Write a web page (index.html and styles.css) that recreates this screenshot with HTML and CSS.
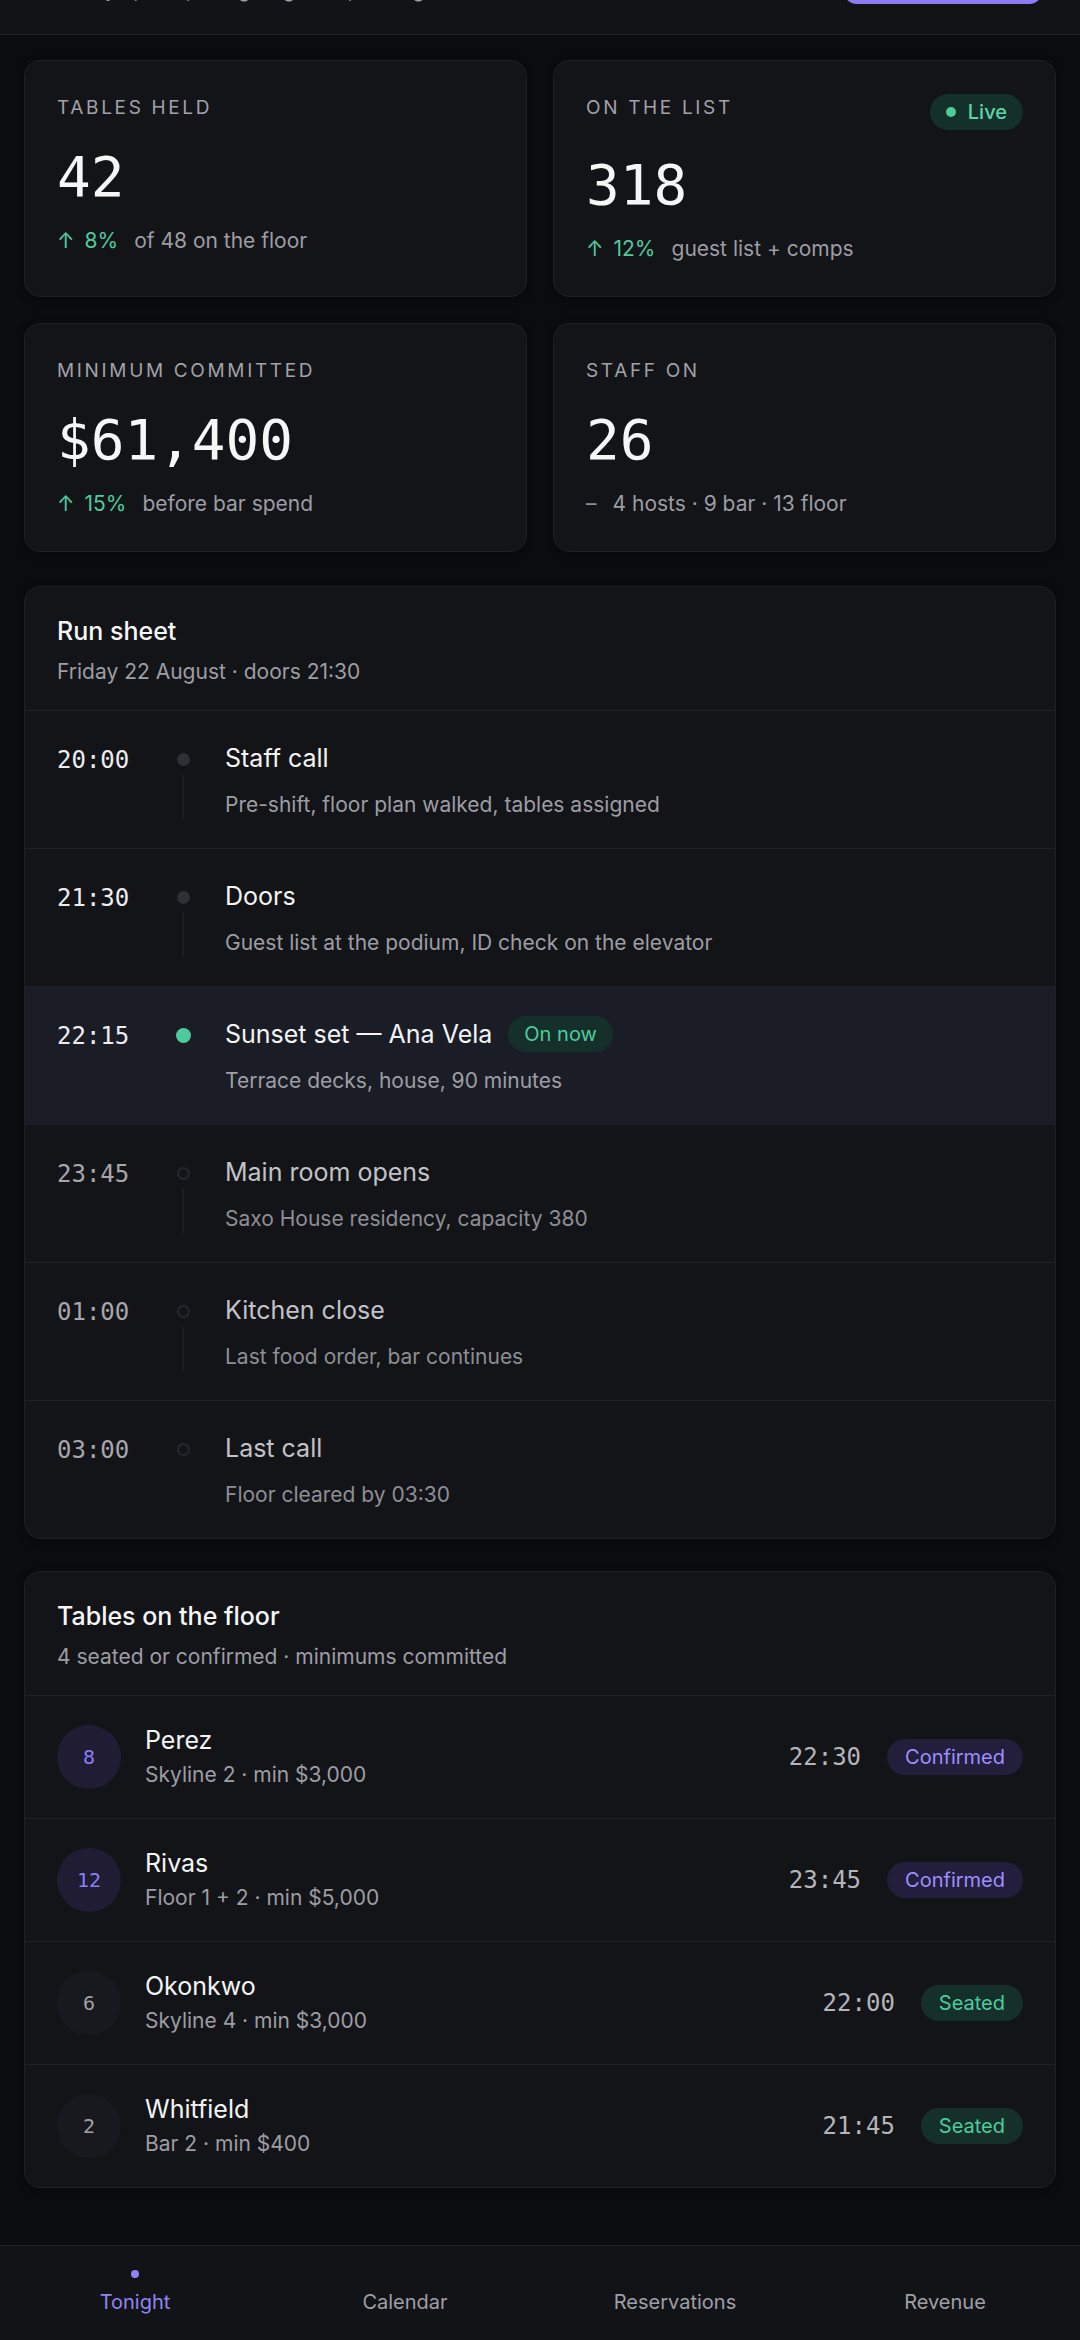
FILE: index.html
```html
<!DOCTYPE html>
<html lang="en">
<head>
    <meta charset="UTF-8">
    <meta name="viewport" content="width=device-width, initial-scale=1.0">
    <title>Tonight - Run sheet</title>
    <link rel="stylesheet" href="styles.css">
</head>
<body>
    <header class="topbar">
        <div class="venue">
            <h1 class="venue-name">Altura Rooftop</h1>
            <p class="venue-sub">Friday · pre-opening · sign-off pending</p>
        </div>
        <button class="btn-primary">New booking</button>
    </header>

    <main class="content">
        <section class="stats">
            <div class="stat">
                <div class="stat-head"><span class="stat-label">Tables held</span></div>
                <div class="stat-value">42</div>
                <div class="stat-foot"><span class="delta up"><span class="arrow">↑</span>8%</span><span>of 48 on the floor</span></div>
            </div>
            <div class="stat">
                <div class="stat-head">
                    <span class="stat-label">On the list</span>
                    <span class="badge badge-live"><i class="live-dot"></i>Live</span>
                </div>
                <div class="stat-value">318</div>
                <div class="stat-foot"><span class="delta up"><span class="arrow">↑</span>12%</span><span>guest list + comps</span></div>
            </div>
            <div class="stat">
                <div class="stat-head"><span class="stat-label">Minimum committed</span></div>
                <div class="stat-value">$61,400</div>
                <div class="stat-foot"><span class="delta up"><span class="arrow">↑</span>15%</span><span>before bar spend</span></div>
            </div>
            <div class="stat">
                <div class="stat-head"><span class="stat-label">Staff on</span></div>
                <div class="stat-value">26</div>
                <div class="stat-foot"><span class="delta flat">–</span><span>4 hosts · 9 bar · 13 floor</span></div>
            </div>
        </section>

        <section class="panel">
            <div class="panel-head">
                <h2>Run sheet</h2>
                <p>Friday 22 August · doors 21:30</p>
            </div>
            <ul class="runsheet">
                <li class="run past">
                    <span class="run-time">20:00</span>
                    <span class="run-track"><i class="dot"></i><i class="rail"></i></span>
                    <div class="run-body">
                        <div class="run-title">Staff call</div>
                        <div class="run-desc">Pre-shift, floor plan walked, tables assigned</div>
                    </div>
                </li>
                <li class="run past">
                    <span class="run-time">21:30</span>
                    <span class="run-track"><i class="dot"></i><i class="rail"></i></span>
                    <div class="run-body">
                        <div class="run-title">Doors</div>
                        <div class="run-desc">Guest list at the podium, ID check on the elevator</div>
                    </div>
                </li>
                <li class="run now">
                    <span class="run-time">22:15</span>
                    <span class="run-track"><i class="dot"></i></span>
                    <div class="run-body">
                        <div class="run-title">Sunset set — Ana Vela <span class="badge badge-now">On now</span></div>
                        <div class="run-desc">Terrace decks, house, 90 minutes</div>
                    </div>
                </li>
                <li class="run next">
                    <span class="run-time">23:45</span>
                    <span class="run-track"><i class="dot"></i><i class="rail"></i></span>
                    <div class="run-body">
                        <div class="run-title">Main room opens</div>
                        <div class="run-desc">Saxo House residency, capacity 380</div>
                    </div>
                </li>
                <li class="run next">
                    <span class="run-time">01:00</span>
                    <span class="run-track"><i class="dot"></i><i class="rail"></i></span>
                    <div class="run-body">
                        <div class="run-title">Kitchen close</div>
                        <div class="run-desc">Last food order, bar continues</div>
                    </div>
                </li>
                <li class="run next">
                    <span class="run-time">03:00</span>
                    <span class="run-track"><i class="dot"></i></span>
                    <div class="run-body">
                        <div class="run-title">Last call</div>
                        <div class="run-desc">Floor cleared by 03:30</div>
                    </div>
                </li>
            </ul>
        </section>

        <section class="panel">
            <div class="panel-head">
                <h2>Tables on the floor</h2>
                <p>4 seated or confirmed · minimums committed</p>
            </div>
            <ul class="tables">
                <li class="table-row confirmed">
                    <span class="avatar">8</span>
                    <div class="guest">
                        <div class="guest-name">Perez</div>
                        <div class="guest-meta">Skyline 2 · min $3,000</div>
                    </div>
                    <span class="table-time">22:30</span>
                    <span class="badge badge-confirmed">Confirmed</span>
                </li>
                <li class="table-row confirmed">
                    <span class="avatar">12</span>
                    <div class="guest">
                        <div class="guest-name">Rivas</div>
                        <div class="guest-meta">Floor 1 + 2 · min $5,000</div>
                    </div>
                    <span class="table-time">23:45</span>
                    <span class="badge badge-confirmed">Confirmed</span>
                </li>
                <li class="table-row seated">
                    <span class="avatar">6</span>
                    <div class="guest">
                        <div class="guest-name">Okonkwo</div>
                        <div class="guest-meta">Skyline 4 · min $3,000</div>
                    </div>
                    <span class="table-time">22:00</span>
                    <span class="badge badge-seated">Seated</span>
                </li>
                <li class="table-row seated">
                    <span class="avatar">2</span>
                    <div class="guest">
                        <div class="guest-name">Whitfield</div>
                        <div class="guest-meta">Bar 2 · min $400</div>
                    </div>
                    <span class="table-time">21:45</span>
                    <span class="badge badge-seated">Seated</span>
                </li>
            </ul>
        </section>
    </main>

    <nav class="tabbar">
        <a class="tab active"><i class="tab-dot"></i>Tonight</a>
        <a class="tab"><i class="tab-dot"></i>Calendar</a>
        <a class="tab"><i class="tab-dot"></i>Reservations</a>
        <a class="tab"><i class="tab-dot"></i>Revenue</a>
    </nav>
</body>
</html>
```

FILE: styles.css
```css
* { box-sizing: border-box; }
body { margin: 0; height: 100vh; overflow: hidden; display: flex; flex-direction: column; background: #0b0c0f; color: #f2f2f4; font-family: Inter, "Noto Sans", sans-serif; }
ul { list-style: none; margin: 0; padding: 0; }
i { display: block; }

/* top bar, mostly scrolled off */
.topbar { flex: none; height: 120px; margin-top: -85px; padding: 0 37px 30px 58px; display: flex; align-items: flex-end; justify-content: space-between; background: #121317; border-bottom: 1px solid #202127; }
.venue-name { margin: 0; font-size: 28px; line-height: 34px; font-weight: 600; }
.venue-sub { margin: 0; font-size: 20px; line-height: 28px; color: #9d9da4; }
.btn-primary { width: 200px; height: 52px; border: none; border-radius: 14px; background: #8b7cf6; color: #fff; font: 500 20px Inter, sans-serif; }

.content { flex: 1; padding: 25px 24px 0; display: flex; flex-direction: column; gap: 32px; }

/* stat cards */
.stats { display: grid; grid-template-columns: 1fr 1fr; gap: 26px; margin-bottom: 2px; }
.stat { background: #131418; border: 1px solid #1f2026; border-radius: 16px; padding: 33px 32px; display: flex; flex-direction: column; box-shadow: 0 2px 8px rgba(0, 0, 0, 0.4); }
.stat-head { display: flex; justify-content: space-between; align-items: flex-start; }
.stat-label { font-size: 19px; line-height: 28px; letter-spacing: 0.14em; text-transform: uppercase; color: #a1a1a8; }
.stat-value { margin-top: 23px; font-family: "DejaVu Sans Mono", monospace; font-size: 56px; line-height: 64px; color: #f6f6f7; }
.stat-foot { margin-top: 18px; display: flex; gap: 16px; font-size: 21px; line-height: 28px; color: #9d9da4; }
.delta.up { color: #4ecb9d; }
.delta .arrow { margin-right: 10px; }
.delta.flat { color: #8d8d94; }

.badge { display: inline-flex; align-items: center; height: 36px; padding: 0 16px; border-radius: 999px; font-size: 20px; font-weight: 500; white-space: nowrap; }
.badge-live { gap: 12px; background: #14302a; color: #5fd3a7; }
.live-dot { width: 10px; height: 10px; border-radius: 50%; background: #4ecb9d; }
.badge-now { margin: -1px 0; padding: 0 16px; background: #15302a; color: #4ecb9d; font-weight: 400; }
.badge-confirmed { padding: 0 18px; background: #221e3c; color: #9d8fff; font-weight: 400; }
.badge-seated { padding: 0 18px; background: #15302a; color: #4ecb9d; font-weight: 400; }

/* panels */
.panel { background: #131418; border: 1px solid #1f2026; border-radius: 16px; overflow: hidden; box-shadow: 0 2px 8px rgba(0, 0, 0, 0.4); }
.panel-head { padding: 27px 32px 24px; }
.panel-head h2 { margin: 0; font-size: 25px; line-height: 34px; font-weight: 500; color: #f6f6f7; }
.panel-head p { margin: 10px 0 0; font-size: 21px; line-height: 28px; color: #9d9da4; }

/* run sheet */
.run { display: grid; grid-template-columns: 84px 32px 1fr; column-gap: 26px; padding: 30px 32px 29px; border-top: 1px solid #1f2026; }
.run-time { font-family: "DejaVu Sans Mono", monospace; font-size: 24px; line-height: 38px; color: #ececef; }
.run-track { display: flex; flex-direction: column; align-items: center; padding-top: 12px; }
.run-track .dot { width: 13px; height: 13px; border-radius: 50%; background: #2f3036; }
.run-track .rail { flex: 1; width: 2px; margin-top: 8px; background: #1c1d22; }
.run-title { display: flex; align-items: center; gap: 16px; font-size: 25px; line-height: 34px; color: #f4f4f5; }
.run-desc { margin-top: 16px; font-size: 21px; line-height: 28px; color: #9d9da4; }
.run.now { background: #1a1d26; }
.run.now .dot { width: 15px; height: 15px; margin-top: -1px; background: #4ecb9d; }
.run.next .run-time { color: #a6a6ac; }
.run.next .run-title { color: #c2c2c7; }
.run.next .run-desc { color: #8e8e95; }
.run.next .dot { background: transparent; border: 2px solid #26272d; }

/* tables */
.table-row { display: flex; align-items: center; gap: 24px; padding: 29px 32px 29px; border-top: 1px solid #1f2026; }
.avatar { flex: none; width: 64px; height: 64px; border-radius: 50%; display: flex; align-items: center; justify-content: center; font-family: "DejaVu Sans Mono", monospace; font-size: 20px; }
.confirmed .avatar { background: #1f1c33; color: #8b7cf6; }
.seated .avatar { background: #18191e; color: #a0a0a6; }
.guest { flex: 1; }
.guest-name { font-size: 25px; line-height: 30px; color: #f4f4f5; }
.guest-meta { margin-top: 6px; font-size: 21px; line-height: 28px; color: #9d9da4; }
.table-time { margin-right: 2px; font-family: "DejaVu Sans Mono", monospace; font-size: 24px; color: #b4b4ba; }

/* bottom tabs */
.tabbar { flex: none; height: 95px; display: flex; background: #121317; border-top: 1px solid #202127; }
.tab { flex: 1; display: flex; flex-direction: column; align-items: center; padding-top: 24px; font-size: 20px; line-height: 28px; color: #9f9fa6; }
.tab-dot { width: 8px; height: 8px; margin-bottom: 10px; border-radius: 50%; }
.tab.active { color: #8f85f2; }
.tab.active .tab-dot { background: #8f85f2; }
```
